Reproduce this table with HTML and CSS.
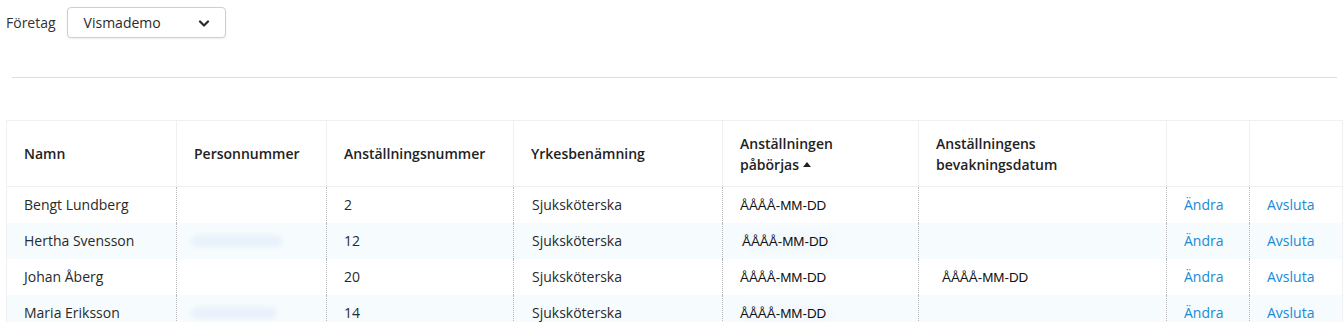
FILE: index.html
```html
<!DOCTYPE html>
<html lang="sv">
<head>
<meta charset="utf-8">
<title>Anställningar</title>
<link rel="stylesheet" href="styles.css">
</head>
<body>
<div class="page">
  <div class="company">
    <label class="company-label">Företag</label>
    <div class="select">
      <span class="select-value">Vismademo</span>
      <svg class="chev" width="12" height="8" viewBox="0 0 12 8"><path d="M2 1.5 L6 5.5 L10 1.5" fill="none" stroke="#2b2b2b" stroke-width="2.2" stroke-linecap="round" stroke-linejoin="round"/></svg>
    </div>
  </div>
  <div class="divider"></div>
  <table class="grid">
    <colgroup>
      <col style="width:170px"><col style="width:150px"><col style="width:187px"><col style="width:209px"><col style="width:196px"><col style="width:248px"><col style="width:83px"><col style="width:93px">
    </colgroup>
    <thead>
      <tr>
        <th>Namn</th>
        <th>Personnummer</th>
        <th>Anställningsnummer</th>
        <th>Yrkesbenämning</th>
        <th>Anställningen<br>påbörjas<span class="sort"></span></th>
        <th>Anställningens<br>bevakningsdatum</th>
        <th></th>
        <th></th>
      </tr>
    </thead>
    <tbody>
      <tr>
        <td>Bengt Lundberg</td>
        <td></td>
        <td>2</td>
        <td class="job">Sjuksköterska</td>
        <td><span class="date">ÅÅÅÅ-MM-DD</span></td>
        <td></td>
        <td><a class="link" href="#">Ändra</a></td>
        <td><a class="link" href="#">Avsluta</a></td>
      </tr>
      <tr class="alt">
        <td>Hertha Svensson</td>
        <td><div class="blur w92"></div></td>
        <td>12</td>
        <td class="job">Sjuksköterska</td>
        <td><span class="date smudge shift">ÅÅÅÅ-MM-DD</span></td>
        <td></td>
        <td><a class="link" href="#">Ändra</a></td>
        <td><a class="link" href="#">Avsluta</a></td>
      </tr>
      <tr>
        <td>Johan Åberg</td>
        <td></td>
        <td>20</td>
        <td class="job">Sjuksköterska</td>
        <td><span class="date">ÅÅÅÅ-MM-DD</span></td>
        <td><span class="date indent">ÅÅÅÅ-MM-DD</span></td>
        <td><a class="link" href="#">Ändra</a></td>
        <td><a class="link" href="#">Avsluta</a></td>
      </tr>
      <tr class="alt">
        <td>Maria Eriksson</td>
        <td><div class="blur w86"></div></td>
        <td>14</td>
        <td class="job">Sjuksköterska</td>
        <td><span class="date smudge">ÅÅÅÅ-MM-DD</span></td>
        <td></td>
        <td><a class="link" href="#">Ändra</a></td>
        <td><a class="link" href="#">Avsluta</a></td>
      </tr>
    </tbody>
  </table>
</div>
</body>
</html>
```
FILE: styles.css
```css
html, body {
  margin: 0;
  padding: 0;
  background: #ffffff;
}
body {
  font-family: "Open Sans", "Noto Sans", sans-serif;
  font-size: 14px;
  color: #2a2a2a;
}
.page {
  padding: 0 1px 0 6px;
  overflow: hidden;
}
.company {
  display: flex;
  align-items: center;
  gap: 11px;
  margin-top: 7px;
  height: 31px;
}
.company-label {
  color: #333;
}
.select {
  box-sizing: border-box;
  width: 159px;
  height: 31px;
  border: 1px solid #cfcfcf;
  border-radius: 4px;
  box-shadow: 0 1px 2px rgba(0,0,0,0.08);
  display: flex;
  align-items: center;
  justify-content: space-between;
  padding: 0 15px 0 16px;
  background: #fff;
}
.select-value {
  color: #2a2a2a;
}
.chev {
  display: block;
  margin-top: 2px;
}
.divider {
  height: 1px;
  background: #dedede;
  margin: 39px 5px 0 6px;
}
.grid {
  margin-top: 42px;
  width: 1336px;
  table-layout: fixed;
  border-collapse: collapse;
}
.grid th {
  height: 65px;
  text-align: left;
  vertical-align: middle;
  font-weight: 600;
  line-height: 21px;
  color: #222;
  padding: 0 17px;
  border: 1px solid #f0f0f0;
}
.grid td {
  height: 35px;
  padding: 0 17px 1px;
  vertical-align: middle;
  color: #2a2a2a;
  border-left: 1px dotted #b8b8b8;
  white-space: nowrap;
}
.grid td:first-child {
  border-left: 1px solid #f0f0f0;
}
.grid td:last-child {
  border-right: 1px solid #f0f0f0;
}
.grid td.job {
  padding-left: 18px;
}
.grid tr.alt td {
  background: #f6fcfd;
}
.sort {
  display: inline-block;
  width: 0;
  height: 0;
  border-left: 4px solid transparent;
  border-right: 4px solid transparent;
  border-bottom: 5px solid #222;
  margin-left: 4px;
  vertical-align: 3px;
}
.date {
  font-family: "Liberation Sans", Arial, sans-serif;
  font-size: 13.4px;
  color: #111;
}
.date.shift {
  margin-left: 2px;
}
.date.indent {
  margin-left: 6px;
}
.smudge {
  background: #f3f8fc;
  border-radius: 8px;
  box-shadow: 4px 0 5px 3px #f3f8fc;
}
.blur {
  height: 12px;
  border-radius: 6px;
  background: #e9f2fb;
  filter: blur(2px);
  margin-left: -3px;
}
.w92 { width: 92px; }
.w86 { width: 86px; }
.link {
  color: #1a8ad6;
  text-decoration: none;
}
```
